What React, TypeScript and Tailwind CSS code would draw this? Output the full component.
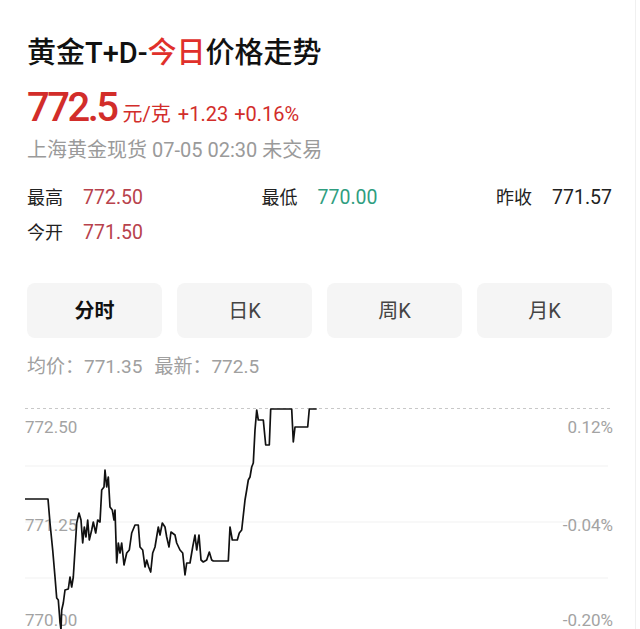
import React from 'react';

const pts =
  '25,499 48,499 50,523 52.7,550 55,577 56.7,598 58.3,600 60,622 61,630 61.7,610 63.3,603 65,590 68.3,589 70,577 71.7,587 73.3,577 76.7,523 79,513 81,520 82.7,543 84.3,527 86,537 87.7,520 89.3,540 91.7,530 93.3,522 95.7,533 97.7,520 100,522 101.7,490 104,487 105,470 106.7,487 108.3,477 110,507 112.3,510 114,520 115,510 116.7,563 118.3,543 120,553 121.7,543 124,565 126.7,553 129.3,550 131.7,533 135,525 138.3,525 140,547 142.7,550 145,567 146.7,560 148.7,567 150.7,572 152.7,553 155,547 158.3,527 160,535 162.3,523 165,527 166.7,537 169,547 171,532 175,535 176.7,543 180,550 182.7,553 185,575 186.7,563 190,563 192.7,547 195,535 196.7,550 199,535 201,560 203.3,562 206.7,560 209.3,552 211.7,560 213.3,561 228.3,561 230,527 232.3,540 237.3,540 239.3,533 241.7,530 245,500 246.7,490 248.3,480 250,477 251.7,467 253.3,463 255,430 256.7,410 258.3,420 263.3,420 265.7,445 269.3,445 270.7,409 291.7,409 293.3,442 295,427 307.7,427 309.3,409 316.7,409';

const tabs = ['分时', '日K', '周K', '月K'];

function Stat({ label, value, color }: { label: string; value: string; color: string }) {
  return (
    <div className="flex items-center gap-[20px]">
      <span className="text-[18px] text-[#222]">{label}</span>
      <span className={`text-[19.5px] ${color}`}>{value}</span>
    </div>
  );
}

export default function App() {
  return (
    <div
      className="w-[636px] min-h-[629px] bg-white border-r border-[#f0f0f0] overflow-hidden"
      style={{ fontFamily: 'Roboto, "Noto Sans CJK SC", sans-serif' }}
    >
      <div className="pl-[27px] pr-[23px]">
        <h1 className="pt-[35px] text-[29px] leading-[36px] font-medium text-[#111]">
          黄金T+D-<span className="text-[#e0302b]">今日</span>价格走势
        </h1>

        <div className="mt-[15px] flex items-baseline h-[44px] text-[#d22d2a]">
          <span className="text-[40px] leading-[44px] font-medium tracking-[-2.5px]">772.5</span>
          <span className="ml-[6px] text-[20px]">元/克</span>
          <span className="ml-[7px] text-[20px]">+1.23</span>
          <span className="ml-[6px] text-[20px]">+0.16%</span>
        </div>

        <div className="mt-[7px] text-[20px] leading-[26px] text-[#9a9a9a]">上海黄金现货 07-05 02:30 未交易</div>

        <div className="mt-[20px] leading-[30px]">
          <div className="flex justify-between">
            <Stat label="最高" value="772.50" color="text-[#b8424c]" />
            <Stat label="最低" value="770.00" color="text-[#2f9e80]" />
            <Stat label="昨收" value="771.57" color="text-[#222]" />
          </div>
          <div className="mt-[5px] flex">
            <Stat label="今开" value="771.50" color="text-[#b8424c]" />
          </div>
        </div>

        <div className="mt-[35px] grid grid-cols-4 gap-[15px]">
          {tabs.map((t, i) => (
            <div
              key={t}
              className={`h-[55px] rounded-[8px] bg-[#f5f5f5] flex items-center justify-center text-[20px] ${
                i === 0 ? 'font-bold text-[#111]' : 'text-[#444]'
              }`}
            >
              {t}
            </div>
          ))}
        </div>

        <div className="mt-[16px] text-[19px] leading-[26px] text-[#a0a0a0] flex gap-[12px]">
          <span>均价：771.35</span>
          <span>最新：772.5</span>
        </div>
      </div>

      <div className="mt-[20px] h-[229px]">
        <svg width="636" height="229" viewBox="0 400 636 229" className="block">
          <line x1="25" y1="408.5" x2="613" y2="408.5" stroke="#c8c8c8" strokeDasharray="3 3" />
          {[466, 522, 578].map((y) => (
            <line key={y} x1="25" y1={y} x2="608" y2={y} stroke="#f1f1f1" />
          ))}
          <g fill="#a3a3a3" fontSize="17" fontFamily="Roboto, sans-serif">
            <text x="25" y="433">772.50</text>
            <text x="25" y="531">771.25</text>
            <text x="25" y="626">770.00</text>
            <text x="613" y="433" textAnchor="end">0.12%</text>
            <text x="613" y="531" textAnchor="end">-0.04%</text>
            <text x="613" y="626" textAnchor="end">-0.20%</text>
          </g>
          <polyline points={pts} fill="none" stroke="#111" strokeWidth="1.7" strokeLinejoin="round" />
        </svg>
      </div>
    </div>
  );
}
